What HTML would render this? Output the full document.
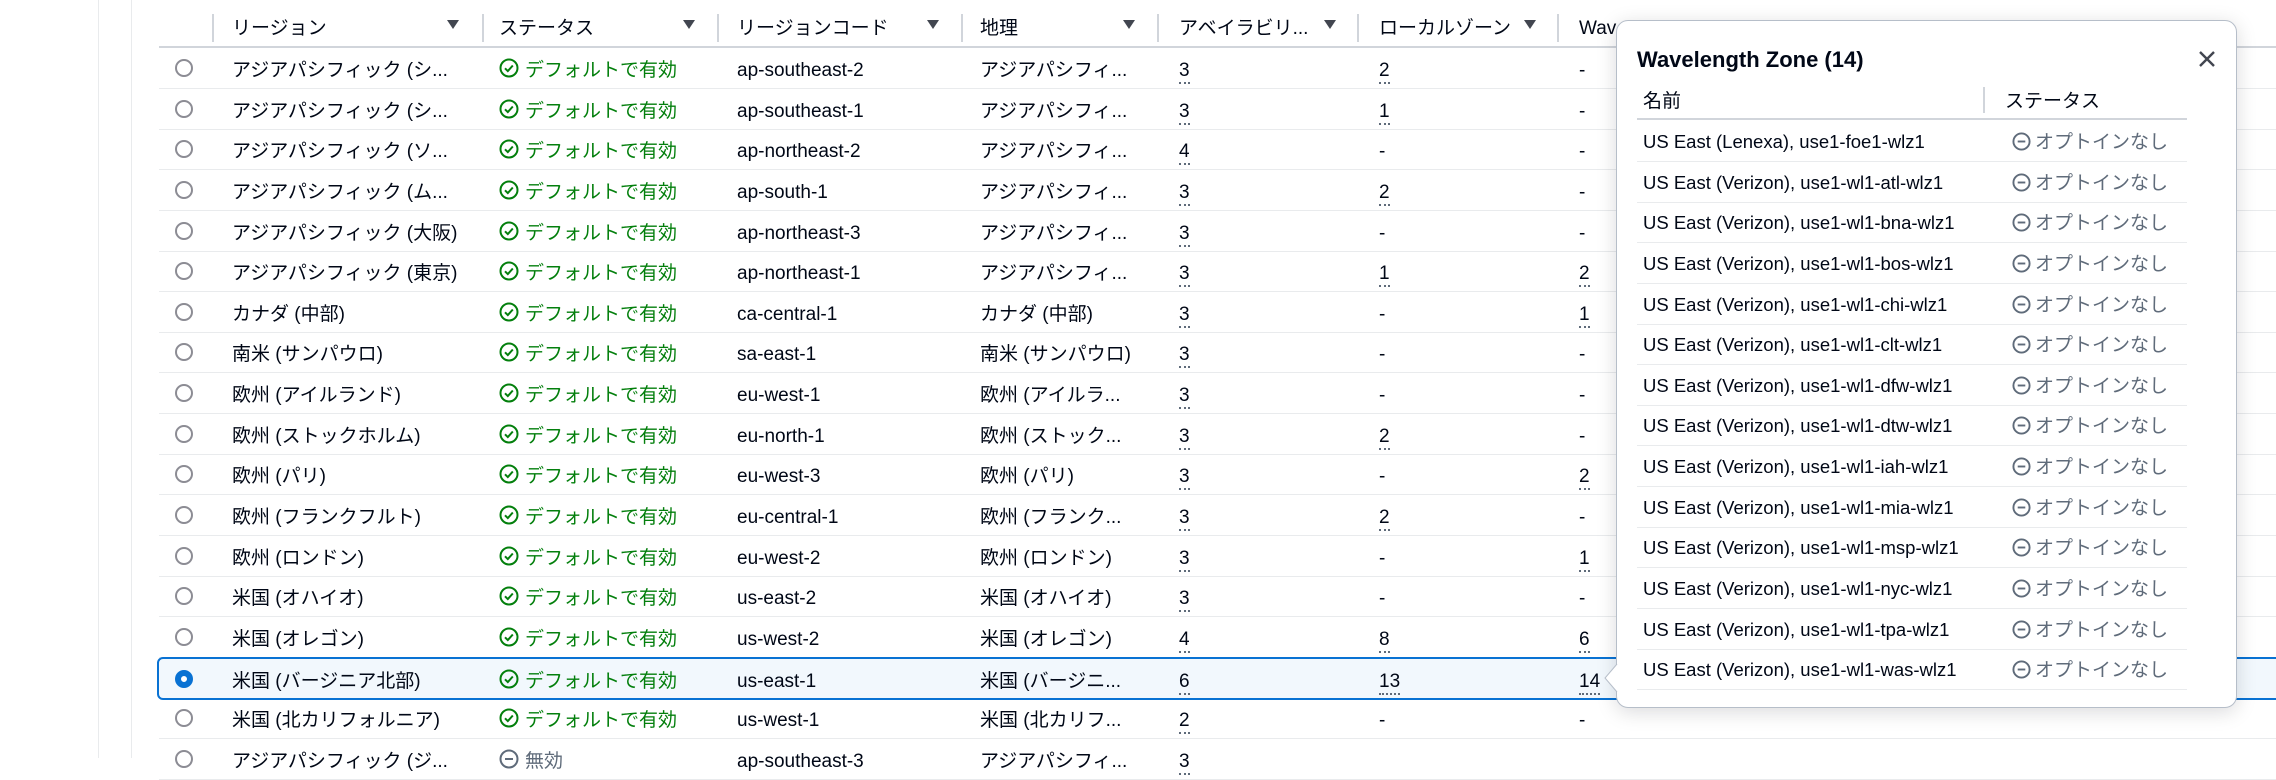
<!DOCTYPE html>
<html><head><meta charset="utf-8"><style>
*{box-sizing:border-box;margin:0;padding:0}
body{width:2276px;height:758px;overflow:hidden;background:#fff;position:relative;font-family:"Liberation Sans","Noto Sans CJK JP",sans-serif;font-size:19px;color:#000716;line-height:22px}
.a{position:absolute;white-space:nowrap;line-height:22px}
.vl{position:absolute;top:0;height:758px;width:1px;background:#e9ebed}
.hd{position:absolute;top:0;left:159px;width:2117px;height:48px;border-bottom:2px solid #d1d5db}
.dv{position:absolute;top:14px;height:28px;width:2px;background:#d1d5db}
.tri{position:absolute;top:20px;width:0;height:0;border-left:6px solid transparent;border-right:6px solid transparent;border-top:9px solid #424650}
.row{position:absolute;left:159px;width:2117px;height:41px;border-bottom:1px solid #e9ebed}
.row .a{top:12px}
.rad{position:absolute;left:16px;top:11px;width:18px;height:18px;border:2px solid #8c8c94;border-radius:50%}
.ok{color:#037f0c}
.u{border-bottom:2px dotted #5f6b7a;display:inline-block;line-height:22px}
.ic{position:absolute;top:10px;left:340px}
.sel{background:#f2f8fd;border:2px solid #0972d3;border-radius:6px;left:157px;width:2130px}
.pop{position:absolute;left:1616px;top:20px;width:621px;height:688px;background:#fff;border:1px solid #b6bec9;border-radius:12px;box-shadow:0 4px 20px rgba(0,7,22,.15)}
.pr{position:absolute;left:20px;width:550px;height:41px;border-bottom:1px solid #e9ebed}
.pr .n{position:absolute;left:6px;top:10px;white-space:nowrap;font-size:18.5px;line-height:22px}
.pr .s{position:absolute;left:398px;top:11px;white-space:nowrap;color:#5f6b7a;line-height:22px}
.pr svg{position:absolute;left:375px;top:11px}
</style></head><body>
<div class="vl" style="left:98px"></div>
<div class="vl" style="left:131px"></div>

<div class="hd">
<div class="dv" style="left:53px"></div>
<div class="a" style="left:73px;top:18px">リージョン</div><div class="tri" style="left:288px"></div>
<div class="dv" style="left:323px"></div>
<div class="a" style="left:340px;top:18px">ステータス</div><div class="tri" style="left:524px"></div>
<div class="dv" style="left:558px"></div>
<div class="a" style="left:578px;top:18px">リージョンコード</div><div class="tri" style="left:768px"></div>
<div class="dv" style="left:802px"></div>
<div class="a" style="left:821px;top:18px">地理</div><div class="tri" style="left:964px"></div>
<div class="dv" style="left:998px"></div>
<div class="a" style="left:1020px;top:18px">アベイラビリ...</div><div class="tri" style="left:1165px"></div>
<div class="dv" style="left:1198px"></div>
<div class="a" style="left:1220px;top:18px">ローカルゾーン</div><div class="tri" style="left:1365px"></div>
<div class="dv" style="left:1398px"></div>
<div class="a" style="left:1420px;top:18px">Wav</div>
</div>

<div id="rows"></div>
<script>
var R=[["アジアパシフィック (シ...","ap-southeast-2","アジアパシフィ...","3","2","-"],
["アジアパシフィック (シ...","ap-southeast-1","アジアパシフィ...","3","1","-"],
["アジアパシフィック (ソ...","ap-northeast-2","アジアパシフィ...","4","-","-"],
["アジアパシフィック (ム...","ap-south-1","アジアパシフィ...","3","2","-"],
["アジアパシフィック (大阪)","ap-northeast-3","アジアパシフィ...","3","-","-"],
["アジアパシフィック (東京)","ap-northeast-1","アジアパシフィ...","3","1","2"],
["カナダ (中部)","ca-central-1","カナダ (中部)","3","-","1"],
["南米 (サンパウロ)","sa-east-1","南米 (サンパウロ)","3","-","-"],
["欧州 (アイルランド)","eu-west-1","欧州 (アイルラ...","3","-","-"],
["欧州 (ストックホルム)","eu-north-1","欧州 (ストック...","3","2","-"],
["欧州 (パリ)","eu-west-3","欧州 (パリ)","3","-","2"],
["欧州 (フランクフルト)","eu-central-1","欧州 (フランク...","3","2","-"],
["欧州 (ロンドン)","eu-west-2","欧州 (ロンドン)","3","-","1"],
["米国 (オハイオ)","us-east-2","米国 (オハイオ)","3","-","-"],
["米国 (オレゴン)","us-west-2","米国 (オレゴン)","4","8","6"],
["米国 (バージニア北部)","us-east-1","米国 (バージニ...","6","13","14"],
["米国 (北カリフォルニア)","us-west-1","米国 (北カリフ...","2","-","-"],
["アジアパシフィック (ジ...","ap-southeast-3","アジアパシフィ...","3","",""]];
var chk='<svg width="20" height="20" viewBox="0 0 20 20"><circle cx="10" cy="10" r="8.5" fill="none" stroke="#037f0c" stroke-width="2"/><path d="M6 10.3l2.8 2.8 5-5.6" fill="none" stroke="#037f0c" stroke-width="2"/></svg>';
var mn='<svg width="20" height="20" viewBox="0 0 20 20"><circle cx="10" cy="10" r="8.5" fill="none" stroke="#5f6b7a" stroke-width="2"/><path d="M6 10h8" stroke="#5f6b7a" stroke-width="2"/></svg>';
var h='';
function cc(v,x){if(v==='')return '';return '<div class="a" style="left:'+x+'px"><span'+(v==='-'?'':' class="u"')+'>'+v+'</span></div>';}
for(var i=0;i<R.length;i++){var r=R[i];var yy=48+i*40.64;var s=(i==15);
h+='<div class="row'+(s?' sel':'')+'" style="top:'+(s?yy-1:yy)+'px'+(s?';height:43px':'')+'">';
h+=s?'<div class="rad" style="left:16px;border:6px solid #0972d3;background:#fff"></div>':'<div class="rad"></div>';
h+='<div class="a" style="left:73px">'+r[0]+'</div>';
if(i<17){h+='<div class="ic">'+chk+'</div><div class="a ok" style="left:366px">デフォルトで有効</div>';}
else{h+='<div class="ic">'+mn+'</div><div class="a" style="left:366px;color:#5f6b7a">無効</div>';}
h+='<div class="a" style="left:578px">'+r[1]+'</div><div class="a" style="left:821px">'+r[2]+'</div>';
h+=cc(r[3],1020)+cc(r[4],1220)+cc(r[5],1420);
h+='</div>';}
document.getElementById('rows').innerHTML=h;
</script>

<div class="pop">
<div class="a" style="left:20px;top:26px;font-weight:bold;font-size:22px;line-height:26px">Wavelength Zone (14)</div>
<svg class="a" style="left:581px;top:29px" width="18" height="18" viewBox="0 0 18 18"><path d="M2 2l14 14M16 2L2 16" stroke="#424650" stroke-width="2.4"/></svg>
<div style="position:absolute;left:20px;top:58px;width:550px;height:41px;border-bottom:2px solid #d1d5db">
<div class="a" style="left:6px;top:12px">名前</div>
<div style="position:absolute;left:346px;top:8px;width:2px;height:26px;background:#d1d5db"></div>
<div class="a" style="left:368px;top:12px">ステータス</div></div>
<div id="pr"></div>
</div>
<svg class="a" style="left:1604px;top:664px" width="14" height="28" viewBox="0 0 14 28"><path d="M13 0L1 14l12 14" fill="#fff" stroke="#b6bec9" stroke-width="1"/></svg>
<script>
var Z=["US East (Lenexa), use1-foe1-wlz1","atl","bna","bos","chi","clt","dfw","dtw","iah","mia","msp","nyc","tpa","was"];
var p='';
for(var j=0;j<14;j++){var n=j==0?Z[0]:'US East (Verizon), use1-wl1-'+Z[j]+'-wlz1';
p+='<div class="pr" style="top:'+(100+j*40.64)+'px"><div class="n">'+n+'</div>'+mn.replace('width="20" height="20"','width="19" height="19"')+'<div class="s">オプトインなし</div></div>';}
document.getElementById('pr').innerHTML=p;
</script>
</body></html>
